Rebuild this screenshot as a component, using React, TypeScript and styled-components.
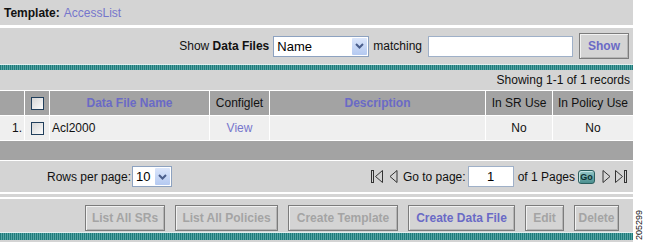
import React from "react";
import styled, { createGlobalStyle } from "styled-components";

const GlobalStyle = createGlobalStyle`
  html, body {
    margin: 0;
    padding: 0;
    background: #ffffff;
  }
  body {
    font-family: "Liberation Sans", Arial, sans-serif;
    font-size: 12px;
    color: #111;
  }
`;

const Page = styled.div`
  display: flex;
  width: 646px;
  height: 242px;
  overflow: hidden;
`;

const Main = styled.div`
  display: flex;
  flex-direction: column;
  width: 633px;
  flex-shrink: 0;
  background: #d4d4d4;
`;

const Side = styled.div`
  flex: 1;
  display: flex;
  align-items: flex-end;
  justify-content: center;
  padding-bottom: 2px;
`;

const FigureRef = styled.span`
  writing-mode: vertical-rl;
  transform: rotate(180deg);
  font-size: 9px;
  line-height: 9px;
  color: #111;
`;

const TitleBar = styled.div`
  height: 25px;
  display: flex;
  align-items: center;
  padding-left: 4px;
  border-bottom: 3px solid #fff;
  gap: 4px;
`;

const Bold = styled.b`
  font-weight: bold;
`;

const Link = styled.span<{ $light?: boolean }>`
  color: ${(p) => (p.$light ? "#7676cc" : "#6a6ac6")};
`;

const FilterBar = styled.div`
  height: 36px;
  display: flex;
  align-items: center;
  justify-content: flex-end;
  padding-right: 4px;
`;

const Label = styled.span<{ $mr?: number; $ml?: number }>`
  margin-right: ${(p) => p.$mr ?? 0}px;
  margin-left: ${(p) => p.$ml ?? 0}px;
  white-space: nowrap;
`;

const SelectWrap = styled.span<{ $w: number }>`
  position: relative;
  display: inline-block;
  width: ${(p) => p.$w}px;
  height: 21px;
`;

const NativeSelect = styled.select`
  appearance: none;
  width: 100%;
  height: 100%;
  box-sizing: border-box;
  margin: 0;
  border: 1px solid #8da2c0;
  border-radius: 0;
  background: #fff;
  padding: 0 18px 0 3px;
  font: 13px "Liberation Sans", Arial, sans-serif;
  color: #000;
  outline: none;
`;

const SelectArrow = styled.span`
  position: absolute;
  top: 2px;
  right: 2px;
  bottom: 2px;
  width: 15px;
  display: flex;
  align-items: center;
  justify-content: center;
  background: linear-gradient(#dbe6fb, #b4c9f1);
  border-radius: 1px;
  pointer-events: none;
`;

const TextField = styled.input<{ $w: number; $center?: boolean }>`
  width: ${(p) => p.$w}px;
  height: 21px;
  box-sizing: border-box;
  margin: 0;
  border: 1px solid #9fb0c8;
  background: #fff;
  padding: 0 3px;
  font: 13px "Liberation Sans", Arial, sans-serif;
  text-align: ${(p) => (p.$center ? "center" : "left")};
  outline: none;
`;

const Button = styled.button<{ $w: number; $active?: boolean; $ml?: number }>`
  width: ${(p) => p.$w}px;
  height: 26px;
  box-sizing: border-box;
  padding: 0;
  margin: 0 0 0 ${(p) => p.$ml ?? 0}px;
  background: #d4d4d4;
  border: 1px solid #7c7c7c;
  box-shadow: inset 1px 1px 0 #f2f2f2, inset -1px -1px 0 #b4b4b4;
  font: bold 12px "Liberation Sans", Arial, sans-serif;
  color: ${(p) => (p.$active ? "#6a6ac6" : "#a4a4a4")};
  white-space: nowrap;
`;

const Stripe = styled.div<{ $h: number }>`
  height: ${(p) => p.$h}px;
  flex-shrink: 0;
  border-top: 1px solid #e4eeee;
  box-sizing: border-box;
  background: repeating-linear-gradient(90deg, #1f7b7b 0 1px, #55a3a3 1px 2px);
`;

const RecordsInfo = styled.div`
  height: 20px;
  line-height: 20px;
  text-align: right;
  padding-right: 3px;
`;

const Grid = styled.div`
  display: grid;
  grid-template-columns: 24px 24px 159px 59px 215px 66px 1fr;
  grid-auto-rows: 24px;
  gap: 1px;
  background: #fff;
  border-top: 1px solid #fff;
  border-bottom: 1px solid #fff;
`;

const HeadCell = styled.div<{ $link?: boolean }>`
  background: #a3a3a3;
  display: flex;
  align-items: center;
  justify-content: center;
  color: ${(p) => (p.$link ? "#6a6ac6" : "#111")};
  font-weight: ${(p) => (p.$link ? "bold" : "normal")};
  white-space: nowrap;
`;

const Cell = styled.div<{ $align?: "left" | "center" | "right" }>`
  background: #efefef;
  display: flex;
  align-items: center;
  justify-content: ${(p) =>
    p.$align === "right" ? "flex-end" : p.$align === "left" ? "flex-start" : "center"};
  padding: ${(p) => (p.$align === "right" ? "0 2px 0 0" : p.$align === "left" ? "0 0 0 2px" : "0")};
`;

const Check = styled.span`
  display: inline-block;
  width: 13px;
  height: 13px;
  box-sizing: border-box;
  border: 1px solid #213f5c;
  background: linear-gradient(135deg, #d6d6d6, #fbfbfb);
`;

const EmptyArea = styled.div`
  height: 19px;
  background: #a3a3a3;
`;

const Pager = styled.div`
  height: 31px;
  display: flex;
  align-items: center;
  padding: 0 6px 0 47px;
  border-top: 1px solid #fff;
  border-bottom: 2px solid #fff;
`;

const PagerNav = styled.div`
  margin-left: auto;
  display: flex;
  align-items: center;
`;

const NavIcon = styled.svg<{ $mr?: number }>`
  display: block;
  margin-right: ${(p) => p.$mr ?? 0}px;
`;

const GoButton = styled.span`
  display: inline-flex;
  align-items: center;
  justify-content: center;
  width: 17px;
  height: 14px;
  margin: 0 7px 0 3px;
  box-sizing: border-box;
  border: 1px solid #2c5f5f;
  border-radius: 3px;
  background: linear-gradient(#94c6c6, #4b8f8f);
  box-shadow: inset 1px 1px 0 #c4e4e4;
  font-size: 9px;
  font-weight: bold;
  color: #0c2f2f;
`;

const Divider = styled.div`
  height: 3px;
`;

const Actions = styled.div`
  height: 35px;
  box-sizing: border-box;
  display: flex;
  justify-content: flex-end;
  align-items: flex-start;
  gap: 10px;
  padding: 6px 14px 0 0;
  border-top: 2px solid #fff;
`;

const Chevron = () => (
  <svg width="9" height="6" viewBox="0 0 9 6">
    <polyline points="1,1 4.5,4.5 8,1" fill="none" stroke="#4a5e8c" strokeWidth="2" />
  </svg>
);

const Select = ({ width, value, options }: { width: number; value: string; options: string[] }) => (
  <SelectWrap $w={width}>
    <NativeSelect defaultValue={value}>
      {options.map((o) => (
        <option key={o}>{o}</option>
      ))}
    </NativeSelect>
    <SelectArrow>
      <Chevron />
    </SelectArrow>
  </SelectWrap>
);

const FirstIcon = () => (
  <NavIcon width="13" height="15" viewBox="0 0 13 15" $mr={5}>
    <rect x="0.5" y="1.5" width="2" height="12" fill="none" stroke="#333" />
    <polygon points="11.5,1.5 4.5,7.5 11.5,13.5" fill="none" stroke="#333" />
  </NavIcon>
);

const PrevIcon = () => (
  <NavIcon width="9" height="15" viewBox="0 0 9 15" $mr={5}>
    <polygon points="8,1.5 1,7.5 8,13.5" fill="none" stroke="#333" />
  </NavIcon>
);

const NextIcon = () => (
  <NavIcon width="9" height="15" viewBox="0 0 9 15" $mr={3}>
    <polygon points="1,1.5 8,7.5 1,13.5" fill="none" stroke="#333" />
  </NavIcon>
);

const LastIcon = () => (
  <NavIcon width="13" height="15" viewBox="0 0 13 15">
    <polygon points="1.5,1.5 8.5,7.5 1.5,13.5" fill="none" stroke="#333" />
    <rect x="10.5" y="1.5" width="2" height="12" fill="none" stroke="#333" />
  </NavIcon>
);

const actions = [
  { label: "List All SRs", w: 80 },
  { label: "List All Policies", w: 103 },
  { label: "Create Template", w: 110 },
  { label: "Create Data File", w: 107, active: true },
  { label: "Edit", w: 39 },
  { label: "Delete", w: 45 },
];

const App = () => {
  return (
    <Page>
      <GlobalStyle />
      <Main>
        <TitleBar>
          <Bold>Template:</Bold>
          <Link $light>AccessList</Link>
        </TitleBar>

        <FilterBar>
          <Label $mr={4}>
            Show <Bold>Data Files</Bold>
          </Label>
          <Select width={96} value="Name" options={["Name", "Description"]} />
          <Label $mr={6} $ml={4}>
            matching
          </Label>
          <TextField $w={145} defaultValue="" />
          <Button $w={50} $active $ml={6}>
            Show
          </Button>
        </FilterBar>

        <Stripe $h={6} />

        <RecordsInfo>Showing 1-1 of 1 records</RecordsInfo>

        <Grid>
          <HeadCell />
          <HeadCell>
            <Check />
          </HeadCell>
          <HeadCell $link>Data File Name</HeadCell>
          <HeadCell>Configlet</HeadCell>
          <HeadCell $link>Description</HeadCell>
          <HeadCell>In SR Use</HeadCell>
          <HeadCell>In Policy Use</HeadCell>

          <Cell $align="right">1.</Cell>
          <Cell>
            <Check />
          </Cell>
          <Cell $align="left">Acl2000</Cell>
          <Cell>
            <Link $light>View</Link>
          </Cell>
          <Cell />
          <Cell>No</Cell>
          <Cell>No</Cell>
        </Grid>

        <EmptyArea />

        <Pager>
          <Label $mr={1}>Rows per page:</Label>
          <Select width={40} value="10" options={["10", "20", "50"]} />
          <PagerNav>
            <FirstIcon />
            <PrevIcon />
            <Label $mr={2}>Go to page:</Label>
            <TextField $w={46} $center defaultValue="1" />
            <Label $ml={4}>of 1 Pages</Label>
            <GoButton>Go</GoButton>
            <NextIcon />
            <LastIcon />
          </PagerNav>
        </Pager>

        <Divider />

        <Actions>
          {actions.map((a) => (
            <Button key={a.label} $w={a.w} $active={a.active}>
              {a.label}
            </Button>
          ))}
        </Actions>

        <Stripe $h={8} />
      </Main>
      <Side>
        <FigureRef>205299</FigureRef>
      </Side>
    </Page>
  );
};

export default App;
